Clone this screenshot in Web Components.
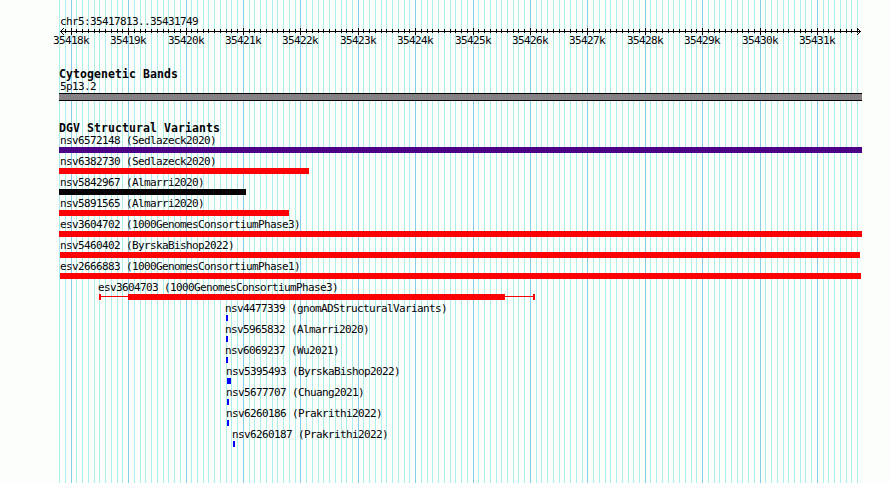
<!DOCTYPE html>
<html lang="en">
<head>
<meta charset="utf-8">
<title>chr5:35417813..35431749</title>
<style>
  body {
    margin: 0;
    background: #fcfefc;
    color: #040204;
    font: 11px/13px "DejaVu Sans Mono", "Liberation Mono", monospace;
    letter-spacing: -0.622px;
  }
</style>
</head>
<body>
<genome-browser>
  <genome-ruler>chr5:35417813..35431749</genome-ruler>
  <genome-track heading="Cytogenetic Bands">
    <genome-band>5p13.2</genome-band>
  </genome-track>
  <genome-track heading="DGV Structural Variants">
    <genome-feature from="59" to="862" color="#4c0284">nsv6572148 (Sedlazeck2020)</genome-feature>
    <genome-feature from="59" to="309">nsv6382730 (Sedlazeck2020)</genome-feature>
    <genome-feature from="59" to="246" color="#040204">nsv5842967 (Almarri2020)</genome-feature>
    <genome-feature from="59" to="289">nsv5891565 (Almarri2020)</genome-feature>
    <genome-feature from="59" to="862">esv3604702 (1000GenomesConsortiumPhase3)</genome-feature>
    <genome-feature from="60" to="860">nsv5460402 (ByrskaBishop2022)</genome-feature>
    <genome-feature from="60" to="861">esv2666883 (1000GenomesConsortiumPhase1)</genome-feature>
    <genome-feature from="99" to="535" thick-from="128" thick-to="505">esv3604703 (1000GenomesConsortiumPhase3)</genome-feature>
    <genome-feature from="226" to="228" color="#0402fc">nsv4477339 (gnomADStructuralVariants)</genome-feature>
    <genome-feature from="226" to="228" color="#0402fc">nsv5965832 (Almarri2020)</genome-feature>
    <genome-feature from="226" to="228" color="#0402fc">nsv6069237 (Wu2021)</genome-feature>
    <genome-feature from="227" to="231" color="#0402fc">nsv5395493 (ByrskaBishop2022)</genome-feature>
    <genome-feature from="227" to="229" color="#0402fc">nsv5677707 (Chuang2021)</genome-feature>
    <genome-feature from="227" to="229" color="#0402fc">nsv6260186 (Prakrithi2022)</genome-feature>
    <genome-feature from="233" to="235" color="#0402fc">nsv6260187 (Prakrithi2022)</genome-feature>
  </genome-track>
</genome-browser>

<script>
const START = 35417813;
const END = 35431749;
const LEFT = 60;
const WIDTH = 800;

// base position -> pixel column
function toX(pos) {
  return Math.round(LEFT + (pos - START) * WIDTH / (END - START + 1));
}

// one entry every 100 bases, major every 1000
function ticks() {
  const list = [];
  for (let pos = 35417800; pos <= END; pos += 100) {
    list.push({ pos, x: toX(pos), major: pos % 1000 === 0 });
  }
  return list;
}

class GenomeBrowser extends HTMLElement {
  constructor() {
    super();
    this.attachShadow({ mode: 'open' });

    const lines = ticks().map(t =>
      `<rect x="${t.x}" y="0" width="1" height="483" fill="${t.major ? '#84ceec' : '#aceeec'}"/>`
    ).join('');

    this.shadowRoot.innerHTML = `
      <style>
        :host {
          display: block;
          position: relative;
          width: 890px;
          height: 483px;
          overflow: hidden;
        }
        .grid {
          position: absolute;
          inset: 0;
        }
        .content {
          position: relative;
          display: flex;
          flex-direction: column;
          gap: 21px;
          padding-top: 15px;
        }
      </style>
      <svg class="grid" width="890" height="483" shape-rendering="crispEdges">${lines}</svg>
      <div class="content"><slot></slot></div>
    `;
  }
}

class GenomeRuler extends HTMLElement {
  constructor() {
    super();
    this.attachShadow({ mode: 'open' });

    const all = ticks();
    const marks = all.filter(t => t.x > LEFT).map(t => t.major
      ? `<rect x="${t.x}" y="0" width="1" height="7"/>`
      : `<rect x="${t.x}" y="1" width="1" height="4"/>`
    ).join('');
    const labels = all.filter(t => t.major).map((t, i, arr) => {
      const prevEnd = i ? arr[i - 1].x + 18 : 0;
      return `<span style="margin-left:${t.x - 18 - prevEnd}px">${t.pos / 1000}k</span>`;
    }).join('');

    this.shadowRoot.innerHTML = `
      <style>
        :host {
          display: block;
          height: 32px;
        }
        .range {
          height: 13px;
          padding-left: 60px;
        }
        svg {
          display: block;
          height: 6px;
          overflow: visible;
          fill: #040204;
        }
        .labels {
          display: flex;
          height: 13px;
        }
        .labels span {
          flex: none;
          width: 36px;
          white-space: nowrap;
        }
      </style>
      <div class="range"><slot></slot></div>
      <svg width="890" height="6" shape-rendering="crispEdges">
        <rect x="60" y="3" width="801" height="1"/>
        ${marks}
        <path d="M61 2h1v1h-1zM62 1h1v1h-1zM63 0h1v1h-1zM61 4h1v1h-1zM62 5h1v1h-1zM63 6h1v1h-1z"/>
        <path d="M859 2h1v1h-1zM858 1h1v1h-1zM857 0h1v1h-1zM859 4h1v1h-1zM858 5h1v1h-1zM857 6h1v1h-1z"/>
      </svg>
      <div class="labels">${labels}</div>
    `;
  }
}

class GenomeTrack extends HTMLElement {
  constructor() {
    super();
    this.attachShadow({ mode: 'open' });
    this.shadowRoot.innerHTML = `
      <style>
        :host {
          display: block;
        }
        h2 {
          margin: 0;
          padding-left: 59px;
          height: 12px;
          font-size: 11.5px;
          line-height: 13px;
          font-weight: bold;
          letter-spacing: 0.077px;
        }
      </style>
      <h2>${this.getAttribute('heading')}</h2>
      <slot></slot>
    `;
  }
}

class GenomeBand extends HTMLElement {
  constructor() {
    super();
    this.attachShadow({ mode: 'open' });
    this.shadowRoot.innerHTML = `
      <style>
        :host {
          display: block;
        }
        .name {
          height: 13px;
          padding-left: 60px;
        }
        .band {
          box-sizing: border-box;
          width: 803px;
          height: 8px;
          margin-left: 59px;
          background: #848284;
          border: solid #040204;
          border-width: 1px 0;
        }
      </style>
      <div class="name"><slot></slot></div>
      <div class="band"></div>
    `;
  }
}

class GenomeFeature extends HTMLElement {
  constructor() {
    super();
    this.attachShadow({ mode: 'open' });

    const from = Number(this.getAttribute('from'));
    const to = Number(this.getAttribute('to'));
    const color = this.getAttribute('color') || '#fc0204';
    const thickFrom = Number(this.getAttribute('thick-from'));
    const thickTo = Number(this.getAttribute('thick-to'));

    // features with uncertain ends: cap, thin line, box, thin line, cap
    const shape = thickFrom ? `
      <i style="width:2px"></i>
      <i class="thin" style="width:${thickFrom - from - 2}px"></i>
      <i style="width:${thickTo - thickFrom}px"></i>
      <i class="thin" style="width:${to - thickTo - 2}px"></i>
      <i style="width:2px"></i>
    ` : `<i style="width:${to - from}px"></i>`;

    this.shadowRoot.innerHTML = `
      <style>
        :host {
          display: block;
          height: 21px;
        }
        .name {
          height: 13px;
          padding-left: ${Math.max(60, from - 1)}px;
          white-space: nowrap;
        }
        .glyph {
          display: flex;
          height: 6px;
          margin-left: ${from}px;
        }
        i {
          flex: none;
          background: ${color};
        }
        .thin {
          height: 1px;
          margin-top: 2px;
        }
      </style>
      <div class="name"><slot></slot></div>
      <div class="glyph">${shape}</div>
    `;
  }
}

customElements.define('genome-browser', GenomeBrowser);
customElements.define('genome-ruler', GenomeRuler);
customElements.define('genome-track', GenomeTrack);
customElements.define('genome-band', GenomeBand);
customElements.define('genome-feature', GenomeFeature);
</script>
</body>
</html>
